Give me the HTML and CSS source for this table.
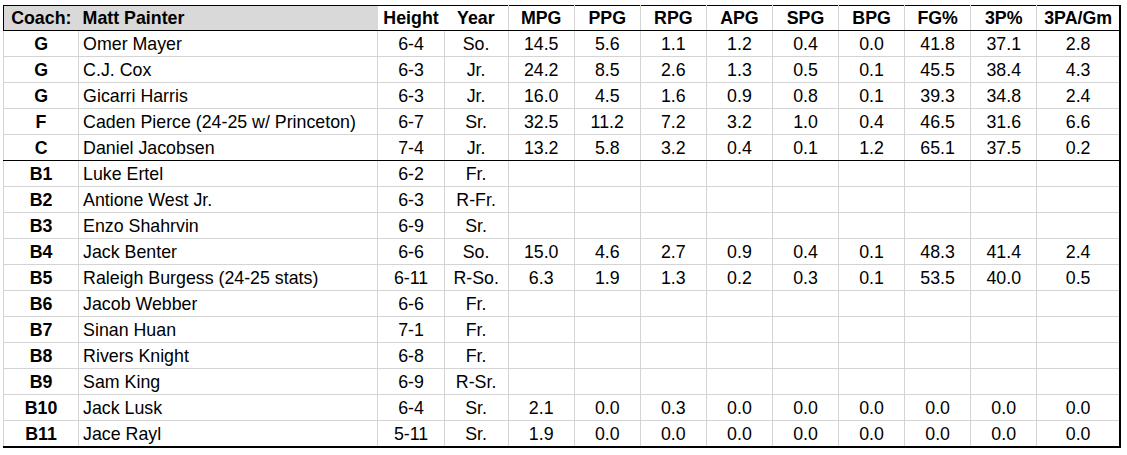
FILE: index.html
```html
<!DOCTYPE html>
<html>
<head>
<meta charset="utf-8">
<link rel="stylesheet" href="styles.css">
</head>
<body>
<table class="roster">
<colgroup>
<col class="c-pos"><col class="c-name"><col class="c-ht"><col class="c-yr">
<col class="c-st"><col class="c-st"><col class="c-st"><col class="c-st"><col class="c-st">
<col class="c-st"><col class="c-st"><col class="c-st"><col class="c-last">
</colgroup>
<thead>
<tr>
<th class="coach">Coach:</th><th class="coach name">Matt Painter</th>
<th class="nosep">Height</th><th class="nosep">Year</th>
<th>MPG</th><th>PPG</th><th>RPG</th><th>APG</th><th>SPG</th><th>BPG</th><th>FG%</th><th>3P%</th><th>3PA/Gm</th>
</tr>
</thead>
<tbody>
<tr><td class="pos">G</td><td class="name">Omer Mayer</td><td>6-4</td><td>So.</td><td>14.5</td><td>5.6</td><td>1.1</td><td>1.2</td><td>0.4</td><td>0.0</td><td>41.8</td><td>37.1</td><td>2.8</td></tr>
<tr><td class="pos">G</td><td class="name">C.J. Cox</td><td>6-3</td><td>Jr.</td><td>24.2</td><td>8.5</td><td>2.6</td><td>1.3</td><td>0.5</td><td>0.1</td><td>45.5</td><td>38.4</td><td>4.3</td></tr>
<tr><td class="pos">G</td><td class="name">Gicarri Harris</td><td>6-3</td><td>Jr.</td><td>16.0</td><td>4.5</td><td>1.6</td><td>0.9</td><td>0.8</td><td>0.1</td><td>39.3</td><td>34.8</td><td>2.4</td></tr>
<tr><td class="pos">F</td><td class="name">Caden Pierce (24-25 w/ Princeton)</td><td>6-7</td><td>Sr.</td><td>32.5</td><td>11.2</td><td>7.2</td><td>3.2</td><td>1.0</td><td>0.4</td><td>46.5</td><td>31.6</td><td>6.6</td></tr>
<tr class="last-starter"><td class="pos">C</td><td class="name">Daniel Jacobsen</td><td>7-4</td><td>Jr.</td><td>13.2</td><td>5.8</td><td>3.2</td><td>0.4</td><td>0.1</td><td>1.2</td><td>65.1</td><td>37.5</td><td>0.2</td></tr>
<tr><td class="pos">B1</td><td class="name">Luke Ertel</td><td>6-2</td><td>Fr.</td><td></td><td></td><td></td><td></td><td></td><td></td><td></td><td></td><td></td></tr>
<tr><td class="pos">B2</td><td class="name">Antione West Jr.</td><td>6-3</td><td>R-Fr.</td><td></td><td></td><td></td><td></td><td></td><td></td><td></td><td></td><td></td></tr>
<tr><td class="pos">B3</td><td class="name">Enzo Shahrvin</td><td>6-9</td><td>Sr.</td><td></td><td></td><td></td><td></td><td></td><td></td><td></td><td></td><td></td></tr>
<tr><td class="pos">B4</td><td class="name">Jack Benter</td><td>6-6</td><td>So.</td><td>15.0</td><td>4.6</td><td>2.7</td><td>0.9</td><td>0.4</td><td>0.1</td><td>48.3</td><td>41.4</td><td>2.4</td></tr>
<tr><td class="pos">B5</td><td class="name">Raleigh Burgess (24-25 stats)</td><td>6-11</td><td>R-So.</td><td>6.3</td><td>1.9</td><td>1.3</td><td>0.2</td><td>0.3</td><td>0.1</td><td>53.5</td><td>40.0</td><td>0.5</td></tr>
<tr><td class="pos">B6</td><td class="name">Jacob Webber</td><td>6-6</td><td>Fr.</td><td></td><td></td><td></td><td></td><td></td><td></td><td></td><td></td><td></td></tr>
<tr><td class="pos">B7</td><td class="name">Sinan Huan</td><td>7-1</td><td>Fr.</td><td></td><td></td><td></td><td></td><td></td><td></td><td></td><td></td><td></td></tr>
<tr><td class="pos">B8</td><td class="name">Rivers Knight</td><td>6-8</td><td>Fr.</td><td></td><td></td><td></td><td></td><td></td><td></td><td></td><td></td><td></td></tr>
<tr><td class="pos">B9</td><td class="name">Sam King</td><td>6-9</td><td>R-Sr.</td><td></td><td></td><td></td><td></td><td></td><td></td><td></td><td></td><td></td></tr>
<tr><td class="pos">B10</td><td class="name">Jack Lusk</td><td>6-4</td><td>Sr.</td><td>2.1</td><td>0.0</td><td>0.3</td><td>0.0</td><td>0.0</td><td>0.0</td><td>0.0</td><td>0.0</td><td>0.0</td></tr>
<tr><td class="pos">B11</td><td class="name">Jace Rayl</td><td>5-11</td><td>Sr.</td><td>1.9</td><td>0.0</td><td>0.0</td><td>0.0</td><td>0.0</td><td>0.0</td><td>0.0</td><td>0.0</td><td>0.0</td></tr>
</tbody>
</table>
</body>
</html>
```
FILE: styles.css
```css
html, body {
  margin: 0;
  padding: 0;
  background: #ffffff;
}
body {
  padding: 5px 0 0 3px;
  font-family: "Liberation Sans", Arial, sans-serif;
  font-size: 17.8px;
  color: #000;
}
.roster {
  border-collapse: collapse;
  table-layout: fixed;
  width: 1118px;
  border-top: 1px solid #000;
  border-left: 1px solid #000;
  border-right: 2px solid #000;
  border-bottom: 2px solid #000;
}
.c-pos { width: 75px; }
.c-name { width: 299px; }
.c-ht { width: 66px; }
.c-yr { width: 64px; }
.c-st { width: 66px; }
.c-last { width: 83px; }
.roster th,
.roster td {
  padding: 0;
  text-align: center;
  white-space: nowrap;
  overflow: hidden;
  line-height: 20px;
}
.roster th {
  height: 24px;
  font-weight: bold;
  border-bottom: 1px solid #000;
  border-left: 1px solid #d4d4d4;
}
.roster th.nosep { border-left: none; }
.roster th.coach {
  background: #d9d9d9;
  border-left: none;
}
.roster th.coach.name {
  text-align: left;
  padding-left: 4px;
}
.roster td {
  height: 25px;
  border: 1px solid #d4d4d4;
}
.roster td.pos { font-weight: bold; }
.roster td.name {
  text-align: left;
  padding-left: 4px;
}
.roster tr.last-starter td { border-bottom: 1px solid #000; }
```
